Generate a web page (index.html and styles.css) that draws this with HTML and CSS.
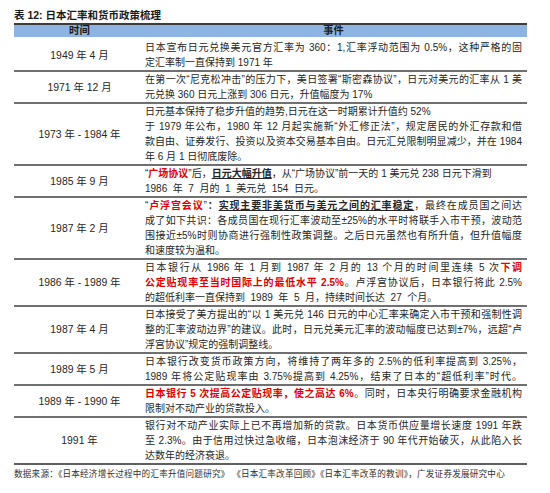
FILE: index.html
```html
<!DOCTYPE html>
<html lang="zh">
<head>
<meta charset="utf-8">
<title>日本汇率和货币政策梳理</title>
<link rel="stylesheet" href="styles.css">
</head>
<body>
<div class="page">
  <div class="title">表 12: 日本汇率和货币政策梳理</div>
  <div class="table">
    <div class="head">
      <div class="c-time">时间</div>
      <div class="c-ev-head">事件</div>
    </div>
    <div class="row first">
      <div class="c-time">1949 年 4 月</div>
      <div class="c-ev">
        <span class="ln j">日本宣布日元兑换美元官方汇率为 360：1,汇率浮动范围为 0.5%，这种严格的固</span>
        <span class="ln">定汇率制一直保持到 1971 年</span>
      </div>
    </div>
    <div class="row">
      <div class="c-time">1971 年 12 月</div>
      <div class="c-ev">
        <span class="ln j">在第一次“尼克松冲击”的压力下，美日签署“斯密森协议”，日元对美元的汇率从 1 美</span>
        <span class="ln">元兑换 360 日元上涨到 306 日元，升值幅度为 17%</span>
      </div>
    </div>
    <div class="row">
      <div class="c-time">1973 年 - 1984 年</div>
      <div class="c-ev">
        <span class="ln">日元基本保持了稳步升值的趋势,日元在这一时期累计升值约 52%</span>
        <span class="ln j">于 1979 年公布，1980 年 12 月起实施新“外汇修正法”，规定居民的外汇存款和借</span>
        <span class="ln j">款自由、证券发行、投资以及资本交易基本自由。日元汇兑限制明显减少，并在 1984</span>
        <span class="ln">年 6 月 1 日彻底废除。</span>
      </div>
    </div>
    <div class="row">
      <div class="c-time">1985 年 9 月</div>
      <div class="c-ev">
        <span class="ln">“<b class="red">广场协议</b>”后，<b class="ul">日元大幅升值</b>，从“广场协议”前一天的 1 美元兑 238 日元下滑到</span>
        <span class="ln">1986 &nbsp;年 &nbsp;7 &nbsp;月的 &nbsp;1 &nbsp;美元兑 &nbsp;154 &nbsp;日元。</span>
      </div>
    </div>
    <div class="row">
      <div class="c-time">1987 年 2 月</div>
      <div class="c-ev">
        <span class="ln j">“<b class="red">卢浮宫会议</b>”<b>：</b><b class="ul">实现主要非美货币与美元之间的汇率稳定</b>，最终在成员国之间达</span>
        <span class="ln j">成了如下共识：各成员国在现行汇率波动至±25%的水平时将联手入市干预，波动范</span>
        <span class="ln j">围接近±5%时则协商进行强制性政策调整。之后日元虽然也有所升值，但升值幅度</span>
        <span class="ln">和速度较为温和。</span>
      </div>
    </div>
    <div class="row">
      <div class="c-time">1986 年 - 1989 年</div>
      <div class="c-ev">
        <span class="ln j">日本银行从 1986 年 1 月到 1987 年 2 月的 13 个月的时间里连续 5 次<b class="red">下调</b></span>
        <span class="ln j"><b class="red">公定贴现率至当时国际上的最低水平 2.5%</b>。卢浮宫协议后，日本银行将此 2.5%</span>
        <span class="ln">的超低利率一直保持到 &nbsp;1989 &nbsp;年 &nbsp;5 &nbsp;月，持续时间长达 &nbsp;27 &nbsp;个月。</span>
      </div>
    </div>
    <div class="row">
      <div class="c-time">1987 年 4 月</div>
      <div class="c-ev">
        <span class="ln j">日本接受了美方提出的“以 1 美元兑 146 日元的中心汇率来确定入市干预和强制性调</span>
        <span class="ln j">整的汇率波动边界”的建议。此时，日元兑美元汇率的波动幅度已达到±7%，远超“卢</span>
        <span class="ln">浮宫协议”规定的强制调整线。</span>
      </div>
    </div>
    <div class="row">
      <div class="c-time">1989 年 5 月</div>
      <div class="c-ev">
        <span class="ln j">日本银行改变货币政策方向，将维持了两年多的 2.5%的低利率提高到 3.25%，</span>
        <span class="ln j">1989 年将公定贴现率由 3.75%提高到 4.25%，结束了日本的“超低利率”时代。</span>
      </div>
    </div>
    <div class="row">
      <div class="c-time">1989 年 - 1990 年</div>
      <div class="c-ev">
        <span class="ln j"><b class="red">日本银行 5 次提高公定贴现率，使之高达 6%</b>。同时，日本央行明确要求金融机构</span>
        <span class="ln">限制对不动产业的贷款投入。</span>
      </div>
    </div>
    <div class="row last">
      <div class="c-time">1991 年</div>
      <div class="c-ev">
        <span class="ln j">银行对不动产业实际上已不再增加新的贷款。日本货币供应量增长速度 1991 年跌</span>
        <span class="ln j">至 2.3%。由于信用过快过急收缩，日本泡沫经济于 90 年代开始破灭，从此陷入长</span>
        <span class="ln">达数年的经济衰退。</span>
      </div>
    </div>
  </div>
  <div class="src">数据来源：《日本经济增长过程中的汇率升值问题研究》 《日本汇率改革回顾》《日本汇率改革的教训》，广发证券发展研究中心</div>
</div>
</body>
</html>
```

FILE: styles.css
```css
html, body {
  margin: 0;
  padding: 0;
  background: #ffffff;
}

body {
  font-family: "Liberation Sans", "Noto Sans CJK SC", sans-serif;
  color: #262626;
}

.page {
  width: 513px;
  padding: 9px 0 0 14px;
}

.title {
  font-size: 10.5px;
  font-weight: bold;
  line-height: 13px;
  color: #1a1a1a;
  margin-bottom: 1px;
}

.table {
  display: flex;
  flex-direction: column;
}

.head {
  display: grid;
  grid-template-columns: 131px 1fr;
  background: #8db4e2;
  border-top: 2px solid #3c3c3c;
  font-size: 10.2px;
  font-weight: bold;
  line-height: 12px;
  color: #1a1a1a;
}

.c-ev-head {
  text-align: center;
  padding-right: 5px;
}

.row {
  display: grid;
  grid-template-columns: 131px 1fr;
  border-top: 2px solid #707070;
  font-size: 10px;
  line-height: 15px;
}

.row.first {
  border-top: none;
  padding-top: 3px;
}

.row.last {
  border-bottom: 2px solid #606060;
}

.c-time {
  display: flex;
  align-items: center;
  justify-content: center;
  text-align: center;
  font-size: 10.4px;
}

.c-ev {
  padding-right: 5px;
  display: flex;
  flex-direction: column;
  min-width: 0;
}

.ln {
  display: block;
  text-align: left;
  white-space: nowrap;
}

.ln.j {
  text-align: justify;
  text-align-last: justify;
}

.red {
  color: #e00000;
  font-weight: bold;
}

.ul {
  font-weight: bold;
  text-decoration: underline;
}

.src {
  margin-top: 3px;
  font-size: 8.6px;
  line-height: 12px;
  letter-spacing: 0.2px;
  white-space: nowrap;
  color: #333333;
}
```
